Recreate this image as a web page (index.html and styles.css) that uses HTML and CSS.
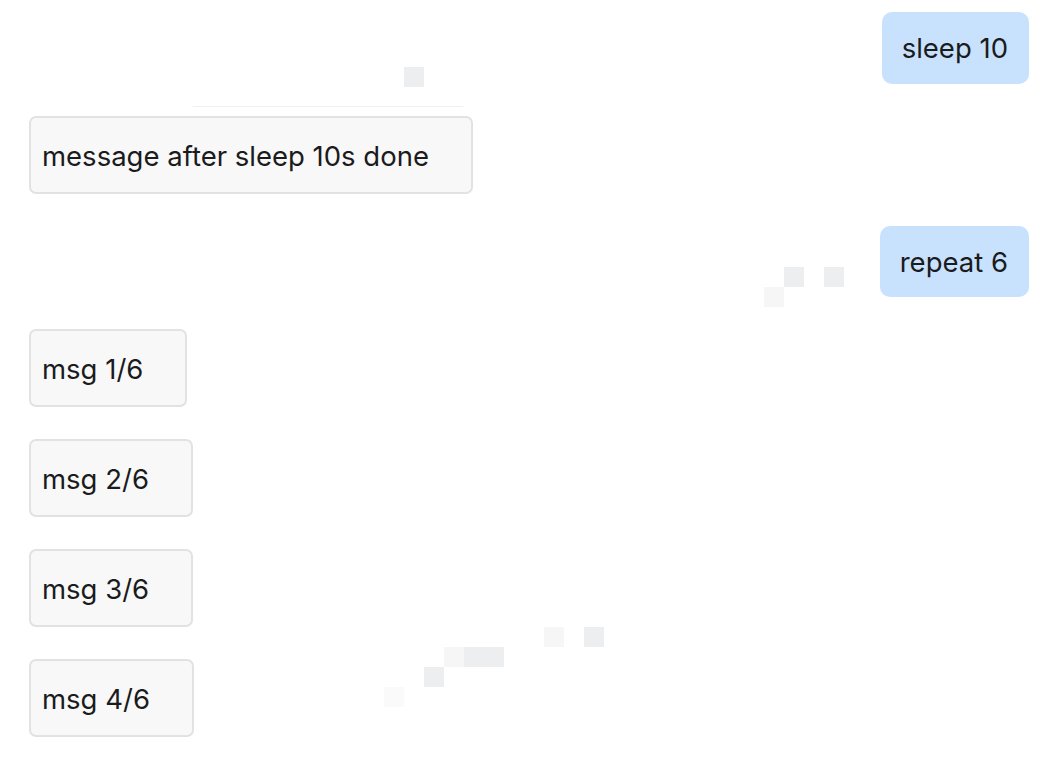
FILE: index.html
```html
<!DOCTYPE html>
<html lang="en">
<head>
<meta charset="utf-8">
<title>Chat</title>
<link rel="stylesheet" href="styles.css">
</head>
<body>
<div class="chat">
  <div class="msg user">sleep 10</div>
  <div class="msg bot">message after sleep 10s done</div>
  <div class="msg user">repeat 6</div>
  <div class="msg bot">msg 1/6</div>
  <div class="msg bot">msg 2/6</div>
  <div class="msg bot">msg 3/6</div>
  <div class="msg bot">msg 4/6</div>
</div>
<div class="wm" aria-hidden="true">
  <span class="sq mid" style="left:404px;top:67px"></span>
  <span class="ln" style="left:193px;top:106px;width:270px"></span>
  <span class="sq mid" style="left:784px;top:267px"></span>
  <span class="sq mid" style="left:824px;top:267px"></span>
  <span class="sq light" style="left:764px;top:287px"></span>
  <span class="sq light" style="left:544px;top:627px"></span>
  <span class="sq mid" style="left:584px;top:627px"></span>
  <span class="sq light" style="left:444px;top:647px"></span>
  <span class="sq mid" style="left:464px;top:647px"></span>
  <span class="sq mid" style="left:484px;top:647px"></span>
  <span class="sq mid" style="left:424px;top:667px"></span>
  <span class="sq faint" style="left:384px;top:687px"></span>
</div>
</body>
</html>
```

FILE: styles.css
```css
html, body {
  margin: 0;
  padding: 0;
  background: #ffffff;
}

body {
  font-family: Inter, "Noto Sans", "Liberation Sans", sans-serif;
  color: #1b1b1d;
  width: 1046px;
  height: 758px;
  overflow: hidden;
  position: relative;
}

.chat {
  display: flex;
  flex-direction: column;
  align-items: flex-start;
  gap: 32px;
  padding: 12px 17px 0 29px;
}

.msg {
  font-size: 27.5px;
  white-space: nowrap;
}

.user {
  align-self: flex-end;
  background: #c8e2fd;
  border-radius: 10px;
  line-height: 31.5px;
  padding: 21px 21px 19px 20px;
}

.bot {
  background: #f8f8f8;
  border: 2px solid #e2e2e2;
  border-radius: 7px;
  line-height: 32px;
  padding: 22px 42px 20px 11px;
}

.wm {
  position: absolute;
  inset: 0;
  pointer-events: none;
}

.sq {
  position: absolute;
  width: 20px;
  height: 20px;
}

.sq.mid { background: #edeef0; }
.sq.light { background: #f6f6f7; }
.sq.faint { background: #fafafa; }

.ln {
  position: absolute;
  height: 1px;
  background: #f0f0f0;
}
```
